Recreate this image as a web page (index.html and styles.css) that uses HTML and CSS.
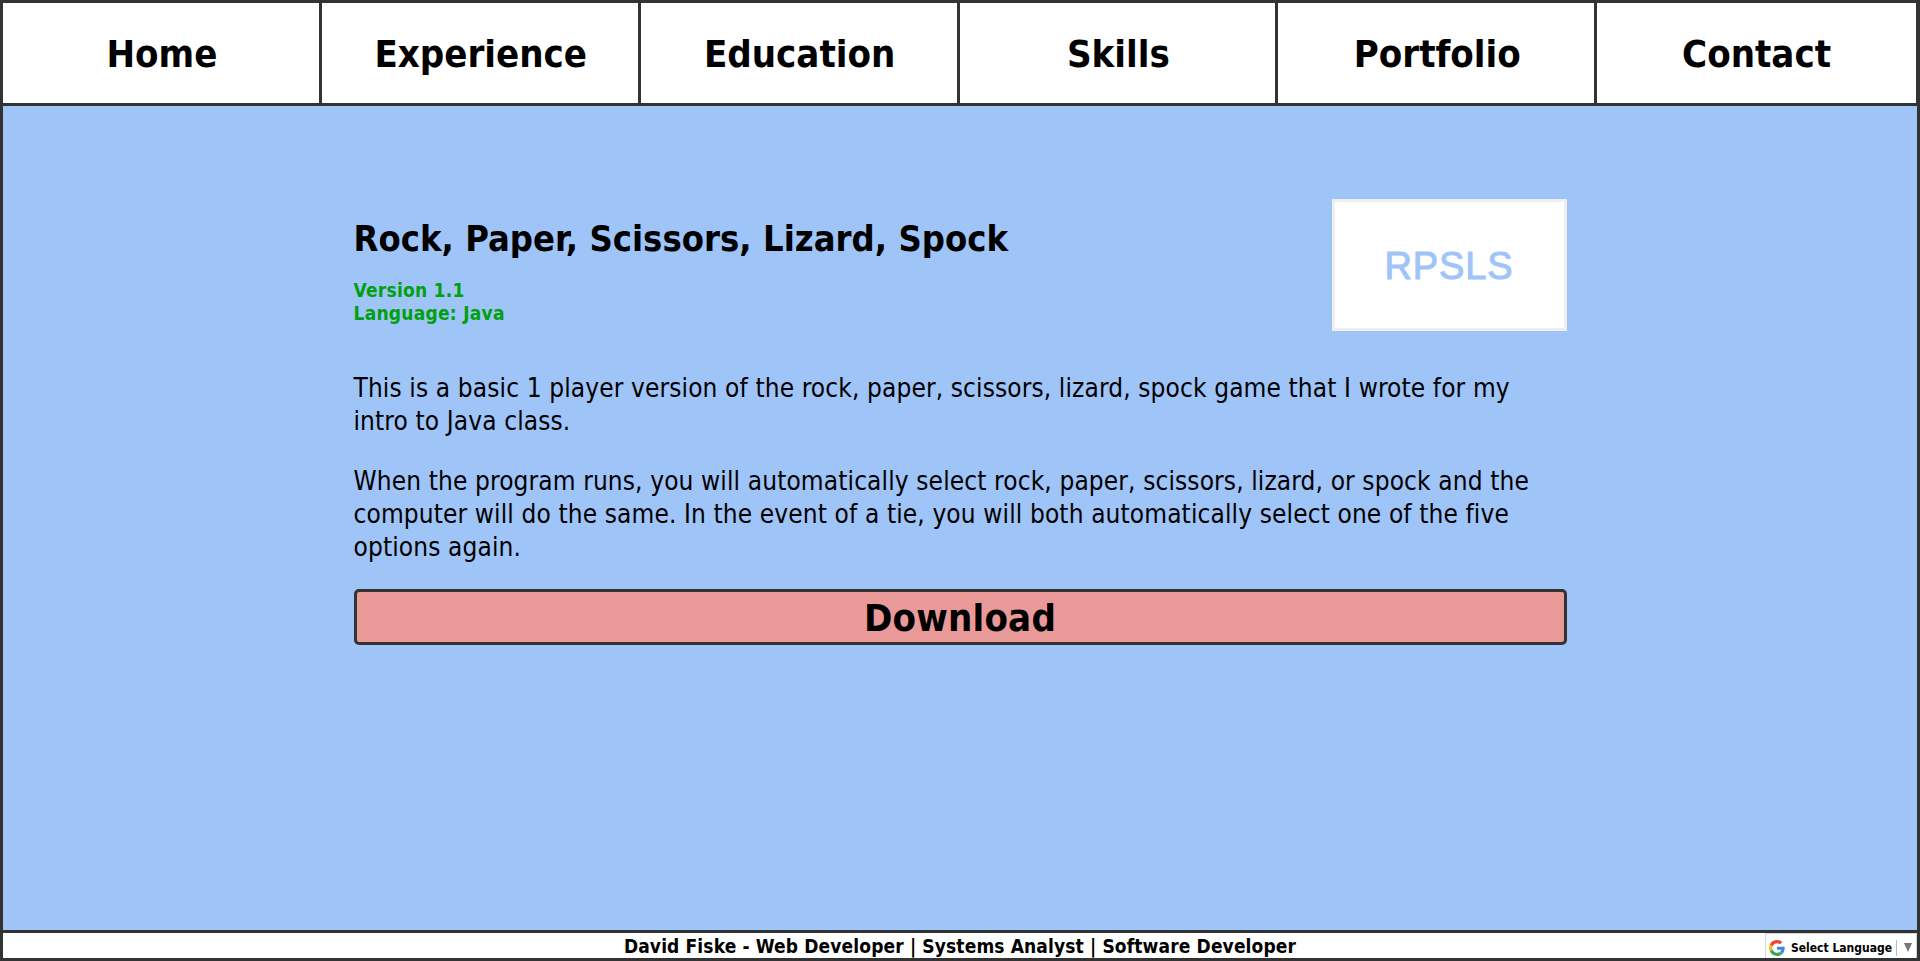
FILE: index.html
```
<!DOCTYPE html>
<html lang="en">
<head>
<meta charset="utf-8">
<title>Rock, Paper, Scissors, Lizard, Spock</title>
<link rel="stylesheet" href="styles.css">
</head>
<body>
<nav class="nav">
<a class="nav-item">Home</a><a class="nav-item">Experience</a><a class="nav-item">Education</a><a class="nav-item">Skills</a><a class="nav-item">Portfolio</a><a class="nav-item">Contact</a>
</nav>
<main class="main">
<article class="project">
<header class="project-head">
<div>
<h1 class="title">Rock, Paper, Scissors, Lizard, Spock</h1>
<div class="meta">Version 1.1<br>Language: Java</div>
</div>
<div class="thumb">RPSLS</div>
</header>
<p class="text">This is a basic 1 player version of the rock, paper, scissors, lizard, spock game that I wrote for my intro to Java class.</p>
<p class="text">When the program runs, you will automatically select rock, paper, scissors, lizard, or spock and the computer will do the same. In the event of a tie, you will both automatically select one of the five options again.</p>
<a class="download">Download</a>
</article>
</main>
<footer class="footer">
<div class="credit">David Fiske - Web Developer | Systems Analyst | Software Developer</div>
<div class="translate">
<svg class="g-logo" viewBox="0 0 48 48"><path fill="#EA4335" d="M24 9.5c3.54 0 6.71 1.22 9.21 3.6l6.85-6.85C35.9 2.38 30.47 0 24 0 14.62 0 6.51 5.38 2.56 13.22l7.98 6.19C12.43 13.72 17.74 9.5 24 9.5z"/><path fill="#4285F4" d="M46.98 24.55c0-1.57-.15-3.09-.38-4.55H24v9.02h12.94c-.58 2.96-2.26 5.48-4.78 7.18l7.73 6c4.51-4.18 7.09-10.36 7.09-17.65z"/><path fill="#FBBC05" d="M10.53 28.59c-.48-1.45-.76-2.99-.76-4.59s.27-3.14.76-4.59l-7.98-6.19C.92 16.46 0 20.12 0 24c0 3.88.92 7.54 2.56 10.78l7.97-6.19z"/><path fill="#34A853" d="M24 48c6.48 0 11.93-2.13 15.89-5.81l-7.73-6c-2.15 1.45-4.92 2.3-8.16 2.3-6.26 0-11.57-4.22-13.47-9.91l-7.98 6.19C6.51 42.62 14.62 48 24 48z"/></svg>
<span class="lang">Select Language</span>
<span class="sep"></span>
<svg class="arrow" viewBox="0 0 8 9"><path fill="#767676" d="M0 0h8L4 9z"/></svg>
</div>
</footer>
</body>
</html>
```
FILE: styles.css
```
* { box-sizing: border-box; }
body {
  margin: 0;
  height: 961px;
  display: flex;
  flex-direction: column;
  overflow: hidden;
  border: 3px solid #333;
  background: #9fc4f8;
  color: #000;
  font-family: Tahoma, "DejaVu Sans Condensed", "DejaVu Sans", sans-serif;
}
.nav {
  display: grid;
  grid-template-columns: repeat(6, 1fr);
  height: 103px;
  padding-right: 1px;
  border-bottom: 3px solid #333;
  background: #333;
}
.nav-item {
  height: 100px;
  padding: 2px 0 0 2px;
  border-right: 3px solid #333;
  background: #fff;
  text-align: center;
  font-size: 38px;
  font-weight: 700;
  line-height: 98px;
}
.nav-item:last-child { border-right: 0; padding-left: 0; }
.main { flex: 1; padding-top: 93px; }
.project { width: 1213px; margin: 0 auto; }
.project-head {
  display: flex;
  justify-content: space-between;
  height: 173px;
}
.title {
  margin: 18px 0 18px;
  font-size: 36px;
  line-height: 44px;
  letter-spacing: 0.03px;
}
.meta {
  color: #00a010;
  font-size: 19px;
  font-weight: 700;
  line-height: 23px;
  letter-spacing: 0.25px;
}
.thumb {
  width: 235px;
  height: 132px;
  border: 3px solid #efeff0;
  background: #fff;
  color: #9fc4f8;
  font: 38px/128px "Liberation Sans", Arial, sans-serif;
  letter-spacing: 0.9px;
  text-align: center;
  -webkit-text-stroke: 1px #9fc4f8;
}
.text {
  margin: 0 0 27px;
  font-size: 26px;
  line-height: 33px;
  letter-spacing: 0.12px;
}
.download {
  display: block;
  height: 56px;
  margin-top: -2px;
  border: 3px solid #333;
  border-radius: 5px;
  background: #ea9999;
  text-align: center;
  font-size: 38px;
  font-weight: 700;
  line-height: 52px;
  letter-spacing: 0.2px;
}
.footer {
  display: grid;
  grid-template-columns: 1fr auto 1fr;
  height: 28px;
  border-top: 3px solid #333;
  background: #fff;
}
.credit {
  grid-column: 2;
  font-size: 19px;
  font-weight: 700;
  line-height: 27px;
  letter-spacing: 0.13px;
}
.translate {
  justify-self: end;
  display: flex;
  align-items: center;
  width: 152px;
  height: 25px;
  padding: 3px 4px 0 3px;
  border: 1px solid #d5d5d5;
  border-bottom: 0;
}
.g-logo { flex: none; width: 16px; height: 16px; margin-right: 6px; }
.lang {
  flex: none;
  width: 101px;
  font-size: 12px;
  font-weight: 700;
  line-height: 16px;
  white-space: nowrap;
}
.sep { flex: none; width: 1px; height: 16px; margin: 0 7px 0 4px; background: #bbb; }
.arrow { flex: none; width: 8px; height: 9px; }
```
